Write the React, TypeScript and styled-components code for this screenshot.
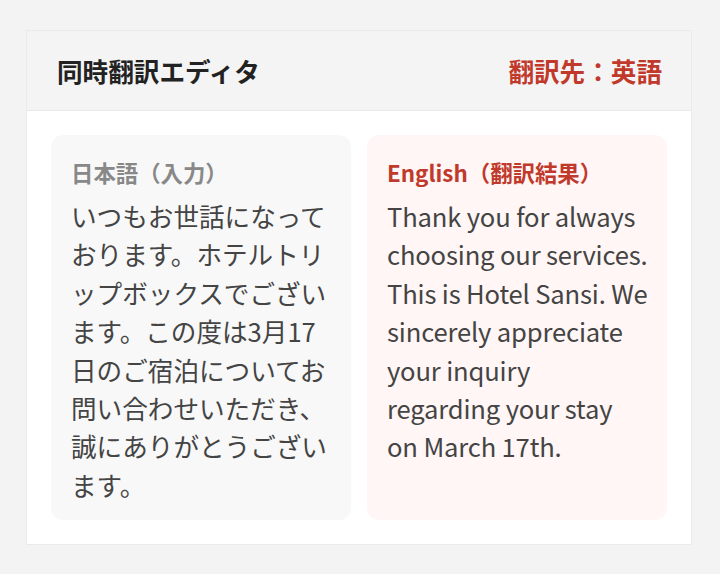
import React from 'react';
import styled, { createGlobalStyle } from 'styled-components';

const GlobalStyle = createGlobalStyle`
  html, body {
    margin: 0;
    padding: 0;
    background: #f3f3f3;
  }
  body {
    font-family: 'Noto Sans CJK JP', 'Noto Sans', sans-serif;
  }
`;

const Page = styled.div`
  padding: 30px 28px 30px 26px;
`;

const Card = styled.div`
  background: #ffffff;
  border: 1px solid #ebebeb;
`;

const Header = styled.div`
  height: 79px;
  display: flex;
  align-items: center;
  justify-content: space-between;
  padding: 0 29px 0 30px;
  background: #f4f4f4;
  border-bottom: 1px solid #e9e9e9;
`;

const Title = styled.h1`
  margin: 0;
  font-size: 25.6px;
  font-weight: 700;
  color: #222;
`;

const Target = styled.span`
  font-size: 25.6px;
  font-weight: 700;
  color: #c0392b;
`;

const Body = styled.div`
  display: grid;
  grid-template-columns: 1fr 1fr;
  gap: 16px;
  padding: 24px;
`;

type Tone = 'source' | 'result';

const Panel = styled.div<{ $tone: Tone }>`
  background: ${(p) => (p.$tone === 'result' ? '#fff6f5' : '#f8f8f8')};
  border-radius: 12px;
  padding: ${(p) => (p.$tone === 'result' ? '20px 12px 16px 20px' : '20px 20px 16px')};
`;

const Label = styled.div<{ $tone: Tone }>`
  font-size: 22.4px;
  line-height: 34px;
  font-weight: 700;
  color: ${(p) => (p.$tone === 'result' ? '#c0392b' : '#888888')};
  margin-bottom: 8px;
`;

const Text = styled.p<{ $tone: Tone }>`
  margin: 0;
  font-size: 25.6px;
  line-height: 38.4px;
  color: #444444;
  letter-spacing: ${(p) => (p.$tone === 'result' ? '-0.16px' : '0')};
`;

const Phrase = styled.span`
  white-space: nowrap;
`;

const App = () => {
  return (
    <>
      <GlobalStyle />
      <Page>
        <Card>
          <Header>
            <Title>同時翻訳エディタ</Title>
            <Target>翻訳先：英語</Target>
          </Header>
          <Body>
            <Panel $tone='source'>
              <Label $tone='source'>日本語（入力）</Label>
              <Text $tone='source'>
                いつもお世話になっております。ホテルトリップボックスでございます。この度は3月17日のご宿泊についてお問い合わせいただき、誠にありがとうございます。
              </Text>
            </Panel>
            <Panel $tone='result'>
              <Label $tone='result'>English（翻訳結果）</Label>
              <Text $tone='result'>
                Thank you for always choosing our services. This is Hotel Sansi. We sincerely appreciate your inquiry{' '}
                <Phrase>regarding your stay</Phrase> <Phrase>on March 17th.</Phrase>
              </Text>
            </Panel>
          </Body>
        </Card>
      </Page>
    </>
  );
};

export default App;
